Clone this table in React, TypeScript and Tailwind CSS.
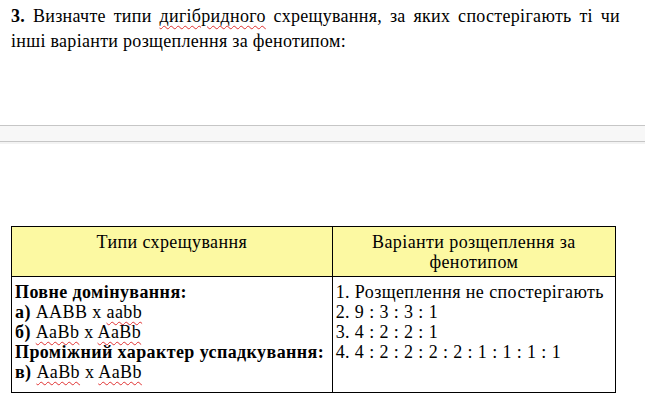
import React from 'react';

function Spell({ children }: { children: React.ReactNode }) {
  return (
    <span className="underline decoration-wavy decoration-[#e03030] decoration-1 underline-offset-[3px]">
      {children}
    </span>
  );
}

export default function App() {
  return (
    <div className="w-[645px] h-[399px] bg-white text-black overflow-hidden font-['Liberation_Serif','Times_New_Roman',serif]">
      <div className="pl-[11px] pr-[25px] pt-[4px] text-[18px] leading-[25px] tracking-[0.3px]">
        <div className="whitespace-nowrap flex justify-between">
          <span><b>3.</b></span>
          <span>Визначте</span>
          <span>типи</span>
          <Spell>дигібридного</Spell>
          <span>схрещування,</span>
          <span>за</span>
          <span>яких</span>
          <span>спостерігають</span>
          <span>ті</span>
          <span>чи</span>
        </div>
        <div>інші варіанти розщеплення за фенотипом:</div>
      </div>

      <div className="mt-[71px] h-[17px] border-y border-[#c6c6c6] bg-[#f7f7f7]" />
      <div className="h-[2px] bg-[#f3f3f3]" />

      <table className="ml-[11px] mt-[82px] w-[605px] border-collapse text-[18px] leading-[20px] tracking-[0.4px]">
        <colgroup>
          <col className="w-[321px]" />
          <col className="w-[284px]" />
        </colgroup>
        <thead>
          <tr className="bg-[#fcf9a2] h-[50px]">
            <th className="border border-black font-normal align-top text-center px-[3px] pt-[5px]">
              Типи схрещування
            </th>
            <th className="border border-black font-normal align-top text-center px-[3px] pt-[5px]">
              Варіанти розщеплення за
              <br />
              фенотипом
            </th>
          </tr>
        </thead>
        <tbody>
          <tr>
            <td className="border border-black align-top px-[3px] pt-[5px] pb-[10px] whitespace-nowrap">
              <div className="font-bold">Повне домінування:</div>
              <div>
                <b>а)</b> AABB x <Spell>aabb</Spell>
              </div>
              <div>
                <b>б)</b> <Spell>AaBb</Spell> x <Spell>AaBb</Spell>
              </div>
              <div className="font-bold">Проміжний характер успадкування:</div>
              <div>
                <b>в)</b> <Spell>AaBb</Spell> x <Spell>AaBb</Spell>
              </div>
            </td>
            <td className="border border-black align-top px-[3px] pt-[5px] pb-[10px] whitespace-nowrap">
              <div>1. Розщеплення не спостерігають</div>
              <div>2. 9 : 3 : 3 : 1</div>
              <div>3. 4 : 2 : 2 : 1</div>
              <div>4. 4 : 2 : 2 : 2 : 2 : 1 : 1 : 1 : 1</div>
            </td>
          </tr>
        </tbody>
      </table>
    </div>
  );
}
